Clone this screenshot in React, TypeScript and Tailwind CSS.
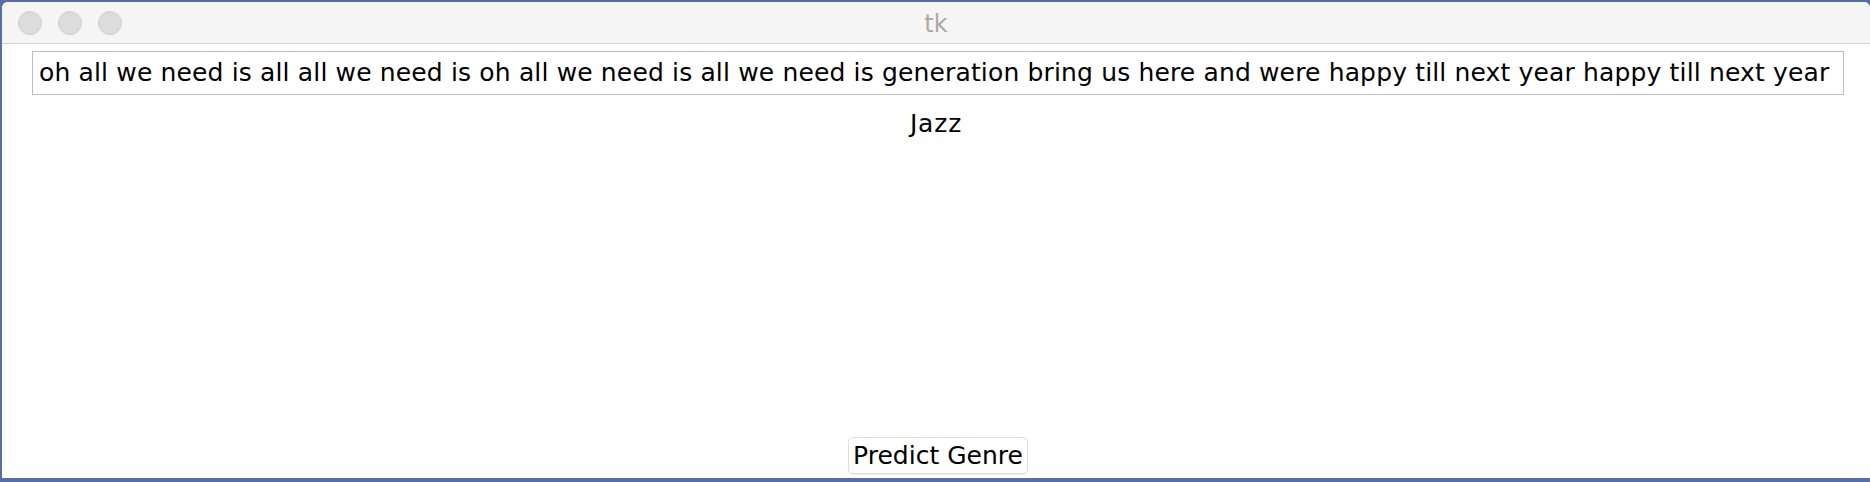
import React from "react";

const lyrics =
  "oh all we need is all all we need is oh all we need is all we need is generation bring us here and were happy till next year happy till next year";

export default function App() {
  return (
    <div className="w-[1870px] h-[482px] bg-[#5670a3] pt-[2px] pl-[2px] pb-[4px] overflow-hidden">
      <div className="flex flex-col h-full bg-white rounded-t-[6px] overflow-hidden font-['DejaVu_Sans',sans-serif]">
        {/* title bar */}
        <div className="relative flex items-center h-[42px] bg-[#f5f5f5] border-b border-[#d2d2d2]">
          <div className="flex gap-[16px] pl-[16px]">
            <span className="w-[24px] h-[24px] rounded-full bg-[#dcdcdc] border border-[#cfcfcf]" />
            <span className="w-[24px] h-[24px] rounded-full bg-[#dcdcdc] border border-[#cfcfcf]" />
            <span className="w-[24px] h-[24px] rounded-full bg-[#dcdcdc] border border-[#cfcfcf]" />
          </div>
          <div className="absolute inset-0 pt-[3px] flex items-center justify-center text-[24px] text-[#a9a9a9]">
            tk
          </div>
        </div>

        {/* body */}
        <div className="flex flex-col flex-1 items-center">
          <div className="self-start mt-[7px] ml-[30px] w-[1812px] h-[44px] border border-[#bdbdbd] flex items-center px-[6px] text-[25px] tracking-[0.15px] text-black whitespace-nowrap overflow-hidden">
            {lyrics}
          </div>
          <div className="mt-[16px] text-[25px] tracking-[0.8px] leading-none text-black">Jazz</div>
          <div className="flex-1" />
          <button className="mb-[4px] ml-[4px] h-[37px] px-[4px] bg-white border border-[#dedede] rounded-[5px] shadow-[0_1px_1px_rgba(0,0,0,0.08)] text-[25px] leading-none text-black">
            Predict Genre
          </button>
        </div>
      </div>
    </div>
  );
}
